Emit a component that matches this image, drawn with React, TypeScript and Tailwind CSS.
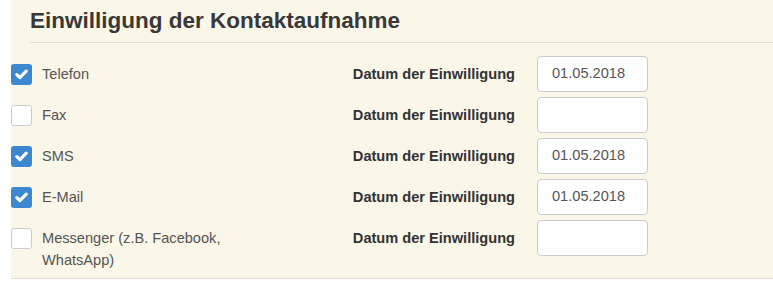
import React from 'react';

type Row = { label: string; checked: boolean; date: string };

const rows: Row[] = [
  { label: 'Telefon', checked: true, date: '01.05.2018' },
  { label: 'Fax', checked: false, date: '' },
  { label: 'SMS', checked: true, date: '01.05.2018' },
  { label: 'E-Mail', checked: true, date: '01.05.2018' },
  { label: 'Messenger (z.B. Facebook, WhatsApp)', checked: false, date: '' },
];

function Check({ checked }: { checked: boolean }) {
  if (!checked) {
    return <span className="mt-[8px] block h-[21px] w-[21px] shrink-0 rounded-[3px] border border-[#cccccc] bg-white" />;
  }
  return (
    <span className="mt-[8px] flex h-[21px] w-[21px] shrink-0 items-center justify-center rounded-[3px] bg-[#3d86d0]">
      <svg width="13" height="11" viewBox="0 0 13 11">
        <path d="M1.8 5.6 L4.9 8.6 L11.2 2.2" fill="none" stroke="white" strokeWidth="3.2" strokeLinecap="round" strokeLinejoin="round" />
      </svg>
    </span>
  );
}

export default function App() {
  return (
    <div className="h-[301px] w-[773px] bg-white pl-[11px] font-['Liberation_Sans',Arial,sans-serif]">
      <div className="border-b border-[#e2dfd6] bg-[#faf6e8] pb-[7px]">
        <div className="pl-[19px]">
          <h2 className="border-b border-[#dedcd5] pb-[9px] pt-[9px] text-[22.5px] font-bold leading-[24px] text-[#383838]">
            Einwilligung der Kontaktaufnahme
          </h2>
        </div>
        <div className="mt-[13px] flex flex-col gap-[5px]">
          {rows.map((r) => (
            <div key={r.label} className="flex items-start">
              <div className="flex w-[300px] items-start gap-[10px]">
                <Check checked={r.checked} />
                <span className="mt-[7px] w-[205px] text-[14.6px] leading-[22px] text-[#555555]">{r.label}</span>
              </div>
              <div className="mt-[8px] w-[204px] text-right text-[14.6px] font-bold leading-[20px] text-[#333333]">
                Datum der Einwilligung
              </div>
              <div className="ml-[22px] flex h-[36px] w-[111px] items-center rounded-[4px] border border-[#cccccc] bg-white px-[14px] text-[14.6px] text-[#555555]">
                {r.date}
              </div>
            </div>
          ))}
        </div>
      </div>
    </div>
  );
}
